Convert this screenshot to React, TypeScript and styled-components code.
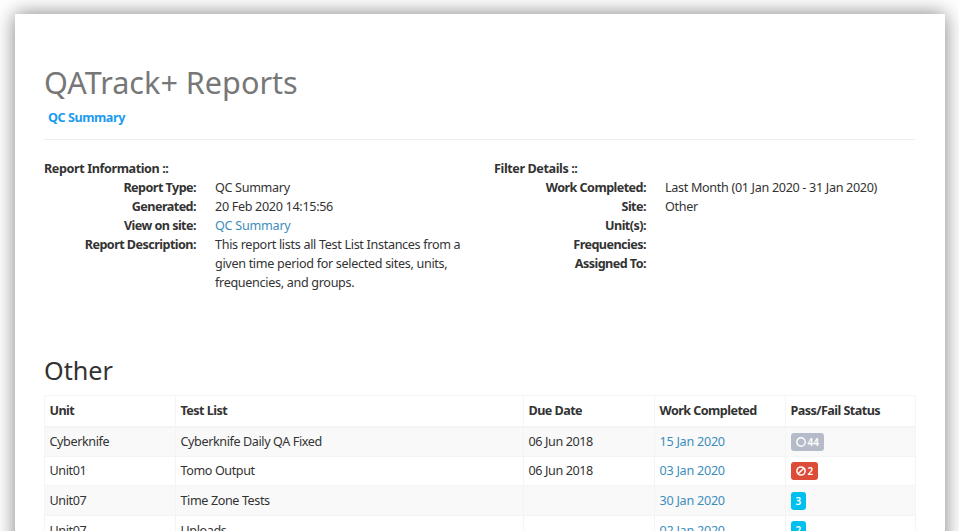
import React from "react";
import styled, { createGlobalStyle } from "styled-components";

const GlobalStyle = createGlobalStyle`
  html, body {
    margin: 0;
    height: 100%;
    overflow: hidden;
    background: #fff;
  }
  body {
    font-family: "Noto Sans", "Open Sans", sans-serif;
    font-size: 12.6px;
    letter-spacing: -0.32px;
    color: #333;
  }
`;

const Sheet = styled.div`
  margin: 14px 14px 0 15px;
  padding: 46px 30px 0 29px;
  height: 700px;
  background: #fff;
  box-shadow: 0 0 19px rgba(0, 0, 0, 0.5);
`;

const Title = styled.h1`
  margin: 0;
  font-size: 30.6px;
  line-height: 44px;
  font-weight: 400;
  letter-spacing: 0;
  color: #777;
`;

const Subtitle = styled.div`
  margin: 4px 0 0 4px;
  line-height: 20px;
  font-weight: 700;
  letter-spacing: -0.45px;
  color: #1a9bf0;
`;

const Rule = styled.hr`
  margin: 11px 0 19px;
  border: 0;
  border-top: 1px solid #eee;
`;

const InfoGrid = styled.div`
  display: grid;
  grid-template-columns: 450px 1fr;
`;

const SectionHead = styled.div`
  font-weight: 700;
  letter-spacing: -0.4px;
  line-height: 19px;
`;

const InfoRow = styled.div`
  display: grid;
  grid-template-columns: 152px 1fr;
  column-gap: 19px;
  line-height: 19px;
`;

const InfoLabel = styled.div`
  font-weight: 700;
  letter-spacing: -0.55px;
  text-align: right;
`;

const InfoValue = styled.div`
  max-width: 250px;
`;

const WideValue = styled(InfoValue)`
  max-width: none;
`;

const SiteLink = styled.a`
  color: #3c8dbc;
  letter-spacing: -0.25px;
  text-decoration: none;
`;

const SiteHeading = styled.h2`
  margin: 60px 0 7px;
  font-size: 25.2px;
  line-height: 36px;
  font-weight: 400;
  letter-spacing: 0;
  color: #333;
`;

const Table = styled.table`
  width: 871px;
  table-layout: fixed;
  border-collapse: collapse;
  border: 1px solid #f4f4f4;
`;

const Row = styled.tr<{ $striped?: boolean }>`
  background: ${(p) => (p.$striped ? "#f9f9f9" : "#fff")};
`;

const HeadCell = styled.th<{ $width: number }>`
  width: ${(p) => p.$width}px;
  height: 31px;
  padding: 0 4.5px;
  box-sizing: border-box;
  border: 1px solid #f4f4f4;
  border-bottom-width: 2px;
  font-weight: 700;
  letter-spacing: -0.55px;
  text-align: left;
`;

const Cell = styled.td`
  height: 29.6px;
  box-sizing: border-box;
  padding: 0 4.5px;
  border: 1px solid #f4f4f4;
  letter-spacing: -0.4px;
`;

const Badge = styled.span<{ $color: string }>`
  display: inline-flex;
  align-items: center;
  gap: 2px;
  height: 18px;
  padding: 0 5px;
  vertical-align: middle;
  border-radius: 3px;
  background: ${(p) => p.$color};
  color: #fff;
  font-size: 10px;
  font-weight: 600;
  letter-spacing: 0;
`;

const NotDoneIcon = () => (
  <svg width="10" height="10" viewBox="0 0 10 10" fill="none" stroke="#fff" strokeWidth="1.4">
    <circle cx="5" cy="5" r="4.2" />
  </svg>
);

const FailIcon = () => (
  <svg width="10" height="10" viewBox="0 0 10 10" fill="none" stroke="#fff" strokeWidth="1.5">
    <circle cx="5" cy="5" r="4.1" />
    <path d="M2.2 7.8 7.8 2.2" />
  </svg>
);

const columns = [
  { name: "Unit", width: 131 },
  { name: "Test List", width: 348 },
  { name: "Due Date", width: 131 },
  { name: "Work Completed", width: 131 },
  { name: "Pass/Fail Status", width: 130 },
];

const rows = [
  { unit: "Cyberknife", list: "Cyberknife Daily QA Fixed", due: "06 Jun 2018", done: "15 Jan 2020", status: <Badge $color="#b5bbc8"><NotDoneIcon />44</Badge> },
  { unit: "Unit01", list: "Tomo Output", due: "06 Jun 2018", done: "03 Jan 2020", status: <Badge $color="#dd4b39"><FailIcon />2</Badge> },
  { unit: "Unit07", list: "Time Zone Tests", due: "", done: "30 Jan 2020", status: <Badge $color="#00c0ef">3</Badge> },
  { unit: "Unit07", list: "Uploads", due: "", done: "02 Jan 2020", status: <Badge $color="#00c0ef">2</Badge> },
];

export default function App() {
  return (
    <>
      <GlobalStyle />
      <Sheet>
        <Title>QATrack+ Reports</Title>
        <Subtitle>QC Summary</Subtitle>
        <Rule />
        <InfoGrid>
          <div>
            <SectionHead>Report Information ::</SectionHead>
            <InfoRow><InfoLabel>Report Type:</InfoLabel><InfoValue>QC Summary</InfoValue></InfoRow>
            <InfoRow><InfoLabel>Generated:</InfoLabel><InfoValue>20 Feb 2020 14:15:56</InfoValue></InfoRow>
            <InfoRow><InfoLabel>View on site:</InfoLabel><InfoValue><SiteLink href="#">QC Summary</SiteLink></InfoValue></InfoRow>
            <InfoRow>
              <InfoLabel>Report Description:</InfoLabel>
              <InfoValue>This report lists all Test List Instances from a given time period for selected sites, units, frequencies, and groups.</InfoValue>
            </InfoRow>
          </div>
          <div>
            <SectionHead>Filter Details ::</SectionHead>
            <InfoRow><InfoLabel>Work Completed:</InfoLabel><WideValue>Last Month (01 Jan 2020 - 31 Jan 2020)</WideValue></InfoRow>
            <InfoRow><InfoLabel>Site:</InfoLabel><WideValue>Other</WideValue></InfoRow>
            <InfoRow><InfoLabel>Unit(s):</InfoLabel><WideValue /></InfoRow>
            <InfoRow><InfoLabel>Frequencies:</InfoLabel><WideValue /></InfoRow>
            <InfoRow><InfoLabel>Assigned To:</InfoLabel><WideValue /></InfoRow>
          </div>
        </InfoGrid>
        <SiteHeading>Other</SiteHeading>
        <Table>
          <thead>
            <Row>
              {columns.map((c) => (
                <HeadCell key={c.name} $width={c.width}>{c.name}</HeadCell>
              ))}
            </Row>
          </thead>
          <tbody>
            {rows.map((r, i) => (
              <Row key={r.list} $striped={i % 2 === 0}>
                <Cell>{r.unit}</Cell>
                <Cell>{r.list}</Cell>
                <Cell>{r.due}</Cell>
                <Cell><SiteLink href="#">{r.done}</SiteLink></Cell>
                <Cell>{r.status}</Cell>
              </Row>
            ))}
          </tbody>
        </Table>
      </Sheet>
    </>
  );
}
